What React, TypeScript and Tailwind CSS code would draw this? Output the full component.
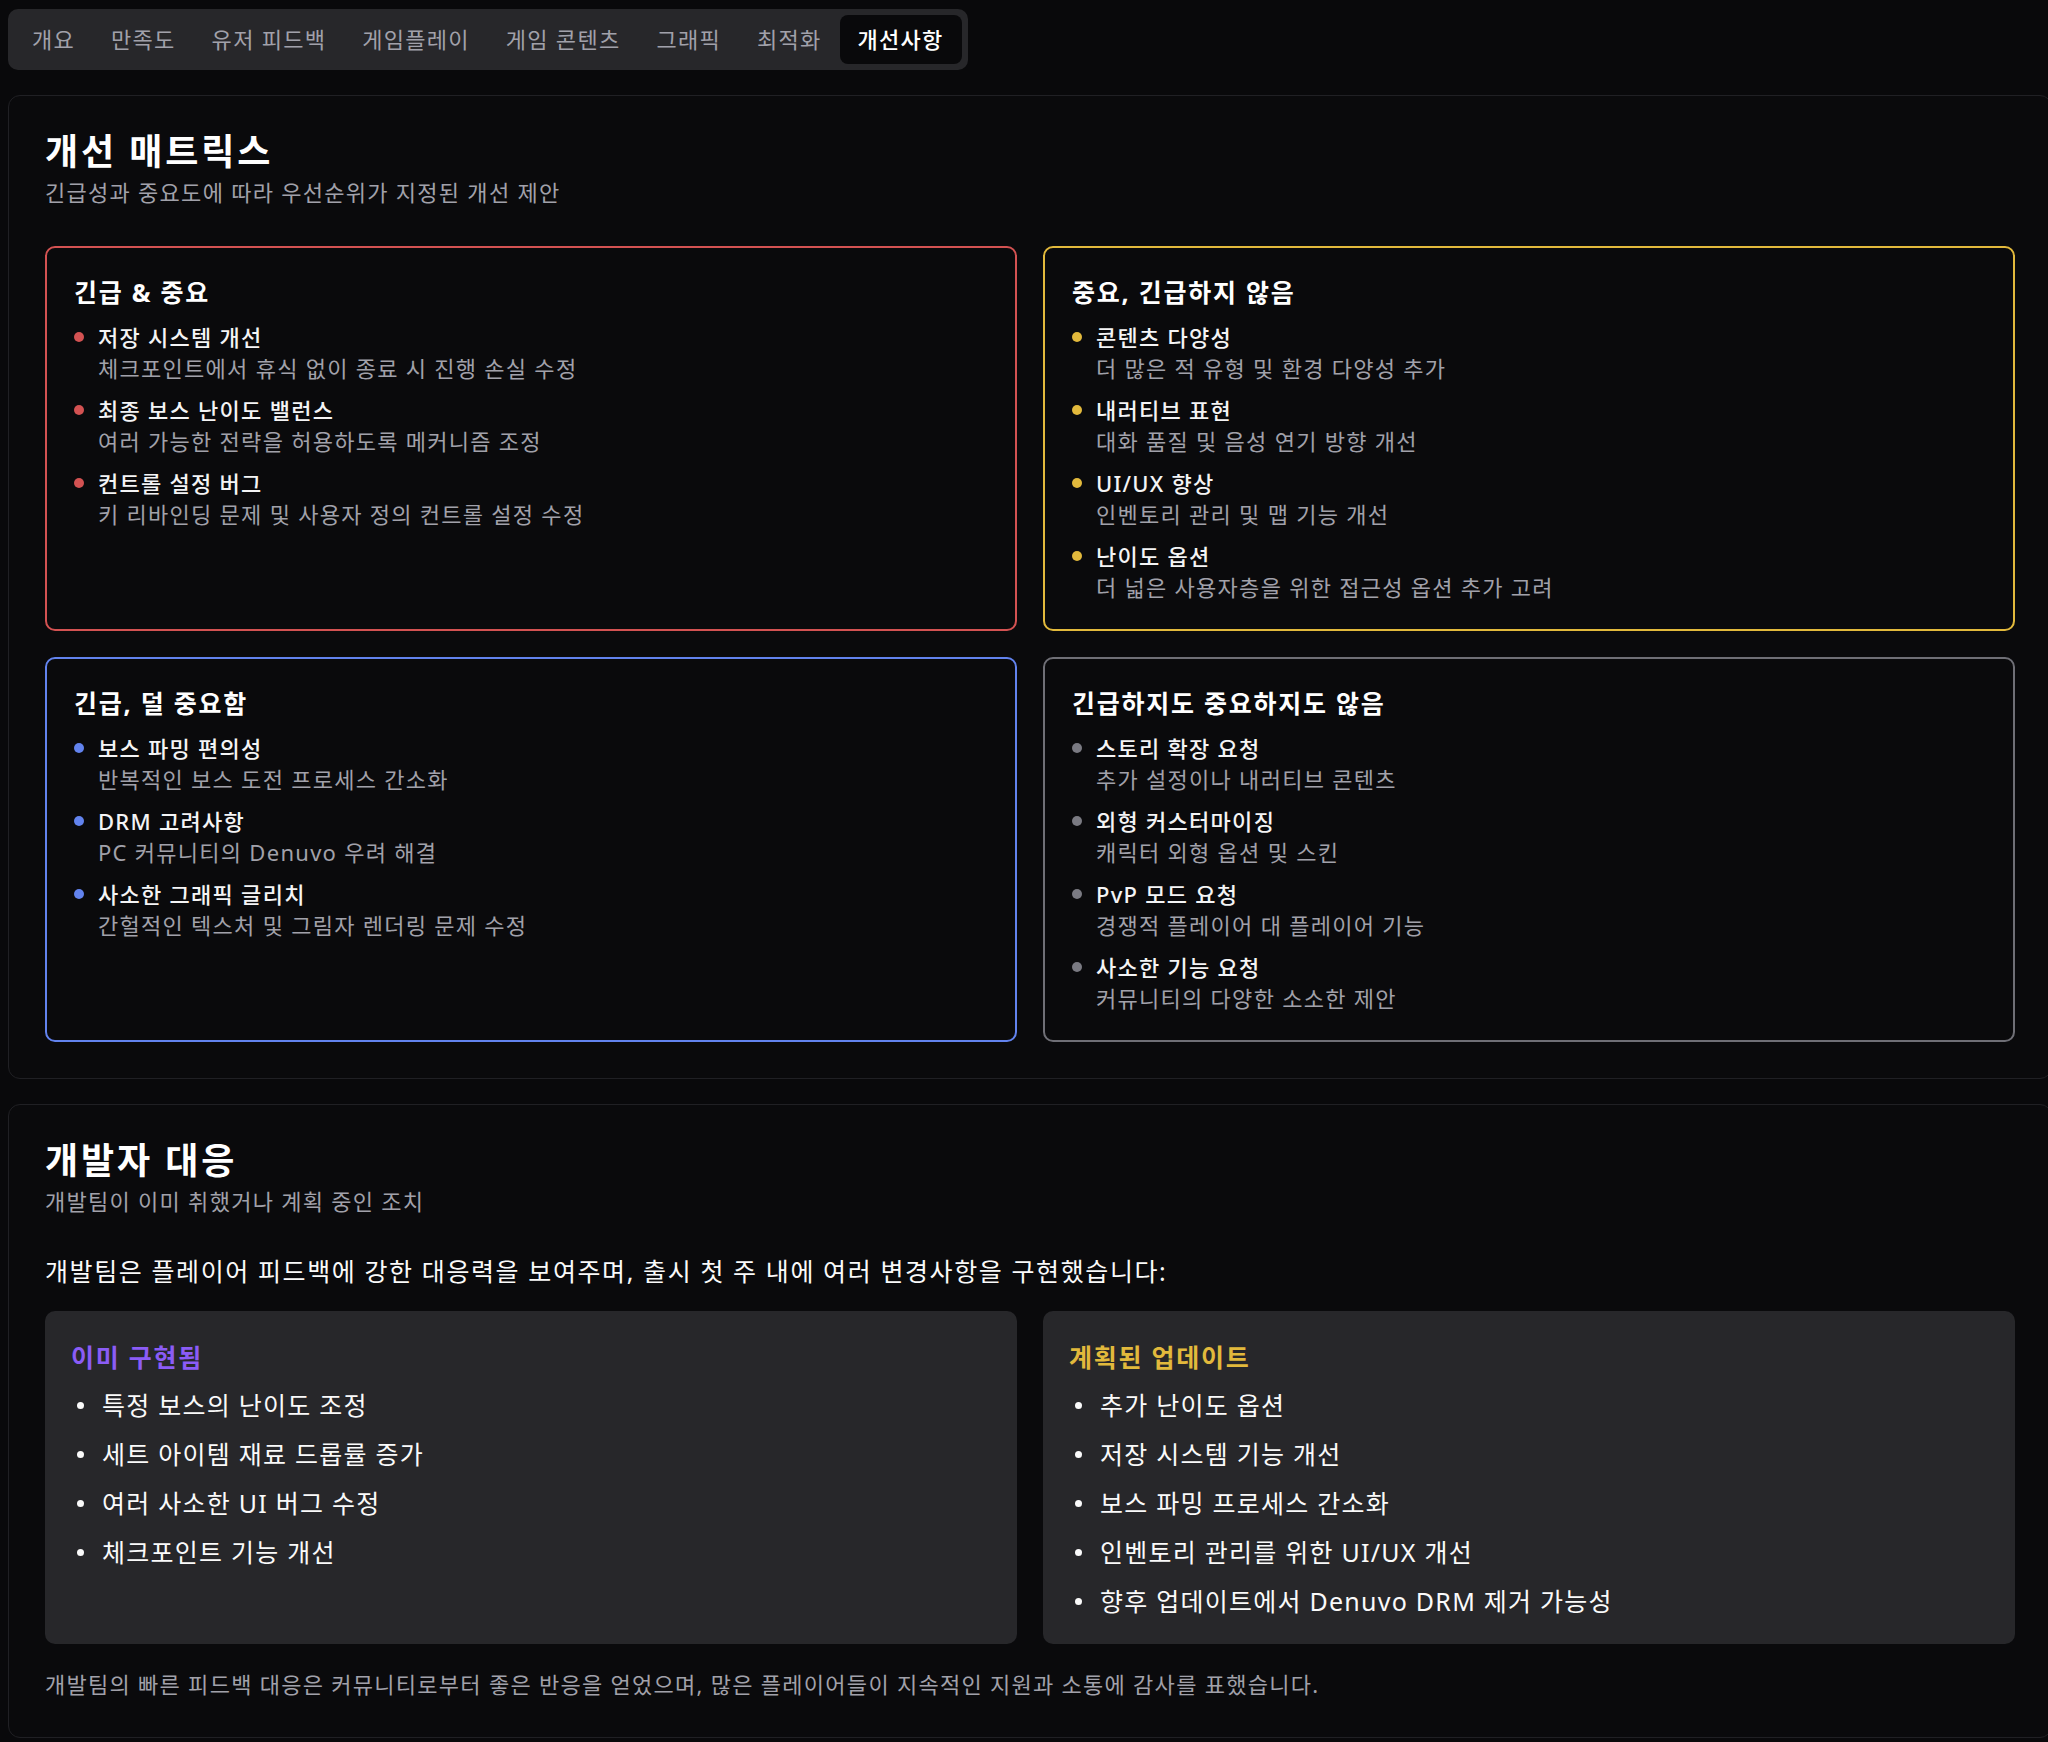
import React from "react";

type Item = { title: string; desc: string };

interface QuadrantProps {
  heading: string;
  border: string;
  dot: string;
  items: Item[];
}

const tabs = ["개요", "만족도", "유저 피드백", "게임플레이", "게임 콘텐츠", "그래픽", "최적화", "개선사항"];

const quadrants: QuadrantProps[] = [
  {
    heading: "긴급 & 중요",
    border: "border-[#d35252]",
    dot: "bg-[#d35252]",
    items: [
      { title: "저장 시스템 개선", desc: "체크포인트에서 휴식 없이 종료 시 진행 손실 수정" },
      { title: "최종 보스 난이도 밸런스", desc: "여러 가능한 전략을 허용하도록 메커니즘 조정" },
      { title: "컨트롤 설정 버그", desc: "키 리바인딩 문제 및 사용자 정의 컨트롤 설정 수정" },
    ],
  },
  {
    heading: "중요, 긴급하지 않음",
    border: "border-[#e2b93c]",
    dot: "bg-[#e2b93c]",
    items: [
      { title: "콘텐츠 다양성", desc: "더 많은 적 유형 및 환경 다양성 추가" },
      { title: "내러티브 표현", desc: "대화 품질 및 음성 연기 방향 개선" },
      { title: "UI/UX 향상", desc: "인벤토리 관리 및 맵 기능 개선" },
      { title: "난이도 옵션", desc: "더 넓은 사용자층을 위한 접근성 옵션 추가 고려" },
    ],
  },
  {
    heading: "긴급, 덜 중요함",
    border: "border-[#6283ee]",
    dot: "bg-[#6283ee]",
    items: [
      { title: "보스 파밍 편의성", desc: "반복적인 보스 도전 프로세스 간소화" },
      { title: "DRM 고려사항", desc: "PC 커뮤니티의 Denuvo 우려 해결" },
      { title: "사소한 그래픽 글리치", desc: "간헐적인 텍스처 및 그림자 렌더링 문제 수정" },
    ],
  },
  {
    heading: "긴급하지도 중요하지도 않음",
    border: "border-[#6f6f76]",
    dot: "bg-[#7a7a82]",
    items: [
      { title: "스토리 확장 요청", desc: "추가 설정이나 내러티브 콘텐츠" },
      { title: "외형 커스터마이징", desc: "캐릭터 외형 옵션 및 스킨" },
      { title: "PvP 모드 요청", desc: "경쟁적 플레이어 대 플레이어 기능" },
      { title: "사소한 기능 요청", desc: "커뮤니티의 다양한 소소한 제안" },
    ],
  },
];

const implemented = [
  "특정 보스의 난이도 조정",
  "세트 아이템 재료 드롭률 증가",
  "여러 사소한 UI 버그 수정",
  "체크포인트 기능 개선",
];

const planned = [
  "추가 난이도 옵션",
  "저장 시스템 기능 개선",
  "보스 파밍 프로세스 간소화",
  "인벤토리 관리를 위한 UI/UX 개선",
  "향후 업데이트에서 Denuvo DRM 제거 가능성",
];

const Quadrant: React.FC<QuadrantProps> = ({ heading, border, dot, items }) => (
  <div className={`rounded-[10px] border-2 ${border} px-[27px] pt-[24px] pb-[26px]`}>
    <h3 className="text-[25px] leading-[40px] font-bold tracking-[0.07em] text-white">{heading}</h3>
    <ul className="mt-[10px] flex flex-col gap-[11px]">
      {items.map((it) => (
        <li key={it.title} className="flex">
          <span className={`mt-[10px] mr-[14px] h-[10px] w-[10px] shrink-0 rounded-full ${dot}`} />
          <div>
            <div className="text-[22px] leading-[31px] font-medium text-[#f4f4f5]">{it.title}</div>
            <div className="text-[22px] leading-[31px] text-[#a1a1aa]">{it.desc}</div>
          </div>
        </li>
      ))}
    </ul>
  </div>
);

const UpdateBox: React.FC<{ heading: string; color: string; items: string[] }> = ({
  heading,
  color,
  items,
}) => (
  <div className="rounded-[10px] bg-[#27272a] px-[26px] pt-[24px] pb-[24px]">
    <h4 className={`text-[25px] leading-[44px] font-bold tracking-[0.07em] ${color}`}>{heading}</h4>
    <ul className="mt-[8px] flex flex-col gap-[12px]">
      {items.map((t) => (
        <li
          key={t}
          className="flex items-center text-[25px] leading-[37px] tracking-[1.25px] text-[#fafafa]"
        >
          <span className="ml-[6px] mr-[18px] h-[7px] w-[7px] shrink-0 rounded-full bg-[#fafafa]" />
          {t}
        </li>
      ))}
    </ul>
  </div>
);

export default function App() {
  return (
    <div className="min-h-screen w-full overflow-hidden bg-[#09090b] pt-[9px] pl-[8px] tracking-[1.28px] font-['Noto_Sans','Noto_Sans_CJK_KR',sans-serif]">
      {/* tabs */}
      <div className="inline-flex h-[61px] items-center rounded-[10px] bg-[#27272a] p-[6px]">
        {tabs.map((t) => (
          <div
            key={t}
            className={
              t === "개선사항"
                ? "flex h-[49px] items-center rounded-[8px] bg-[#09090b] px-[18px] text-[22px] font-medium text-white"
                : "flex h-[49px] items-center px-[18px] text-[22px] text-[#a1a1aa]"
            }
          >
            {t}
          </div>
        ))}
      </div>

      {/* matrix */}
      <div className="mt-[25px] w-[2044px] rounded-[12px] border border-[#202024] bg-[#0a0a0c] p-9">
        <h2 className="text-[36px] leading-[40px] font-bold tracking-[0.08em] text-white">개선 매트릭스</h2>
        <p className="mt-[4px] text-[22px] leading-[33px] text-[#a1a1aa]">
          긴급성과 중요도에 따라 우선순위가 지정된 개선 제안
        </p>
        <div className="mt-[37px] grid grid-cols-2 gap-[26px]">
          {quadrants.map((q) => (
            <Quadrant key={q.heading} {...q} />
          ))}
        </div>
      </div>

      {/* developer response */}
      <div className="mt-[25px] w-[2044px] rounded-[12px] border border-[#202024] bg-[#0a0a0c] p-9">
        <h2 className="text-[36px] leading-[40px] font-bold tracking-[0.08em] text-white">개발자 대응</h2>
        <p className="mt-[4px] text-[22px] leading-[33px] text-[#a1a1aa]">
          개발팀이 이미 취했거나 계획 중인 조치
        </p>
        <p className="mt-[35px] text-[25px] leading-[36px] tracking-[1.6px] text-[#fafafa]">
          개발팀은 플레이어 피드백에 강한 대응력을 보여주며, 출시 첫 주 내에 여러 변경사항을 구현했습니다:
        </p>
        <div className="mt-[22px] grid grid-cols-2 gap-[26px]">
          <UpdateBox heading="이미 구현됨" color="text-[#8b5cf6]" items={implemented} />
          <UpdateBox heading="계획된 업데이트" color="text-[#e2b93c]" items={planned} />
        </div>
        <p className="mt-[24px] text-[22px] leading-[33px] text-[#a1a1aa]">
          개발팀의 빠른 피드백 대응은 커뮤니티로부터 좋은 반응을 얻었으며, 많은 플레이어들이 지속적인 지원과 소통에 감사를 표했습니다.
        </p>
      </div>
    </div>
  );
}
